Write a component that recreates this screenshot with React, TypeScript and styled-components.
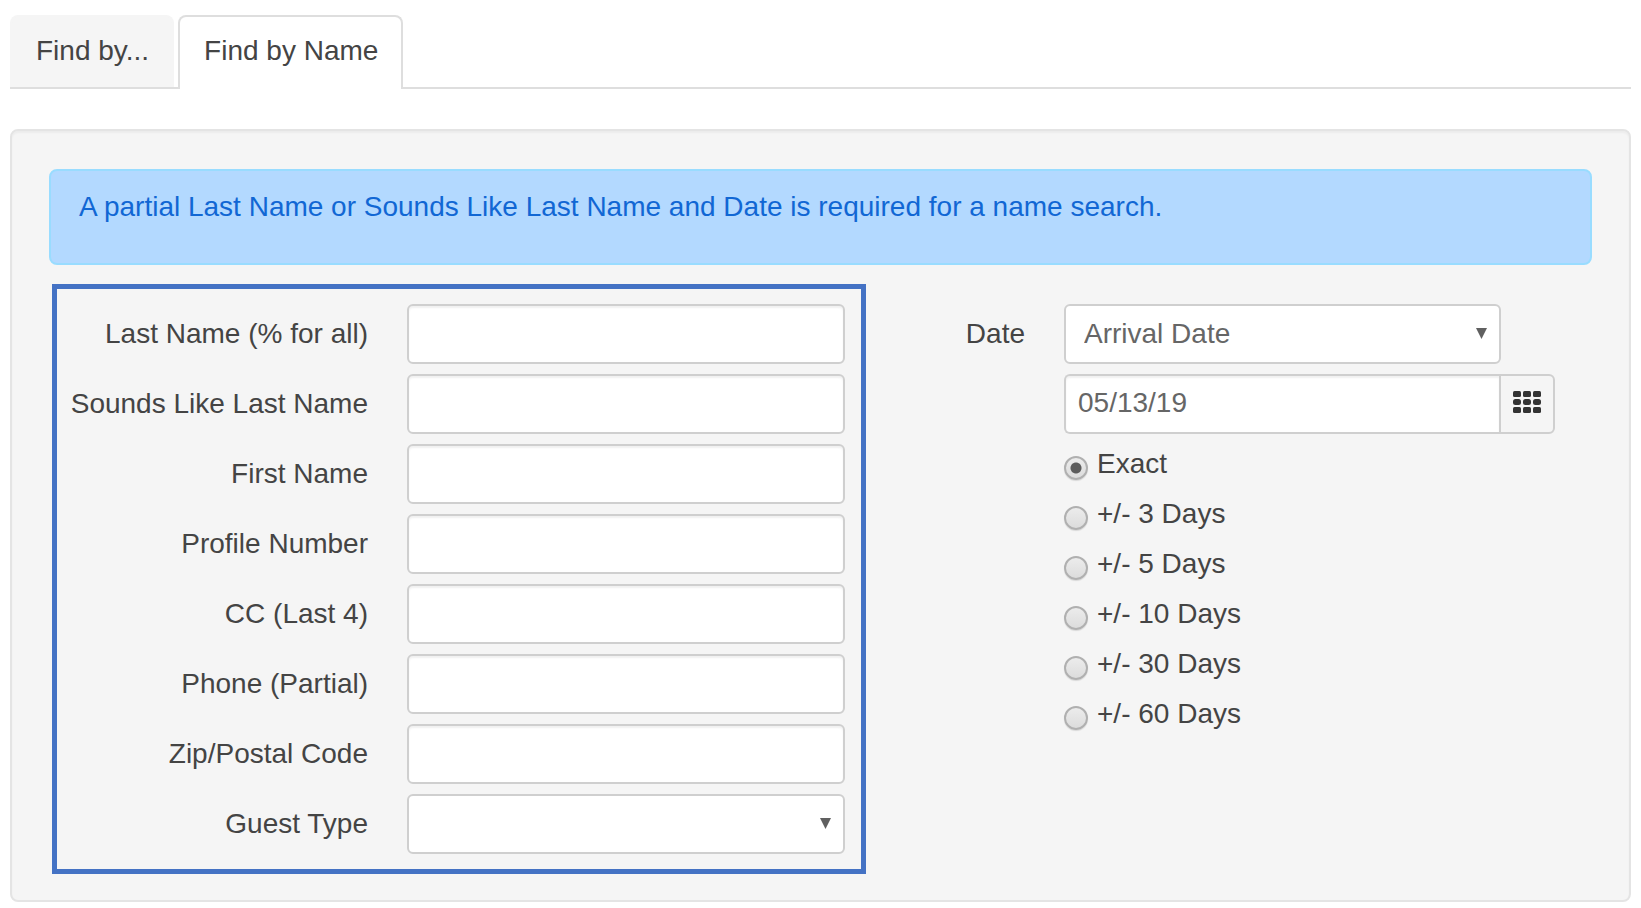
import React, { useState } from "react";
import styled, { createGlobalStyle, css } from "styled-components";

const GlobalStyle = createGlobalStyle`
  *, *::before, *::after { box-sizing: border-box; }
  body {
    margin: 0;
    background: #fff;
    color: #444;
    font: 28px/40px "Liberation Sans", Arial, Helvetica, sans-serif;
  }
  button, input, select { font: inherit; color: inherit; margin: 0; }
`;

const Page = styled.main`
  padding: 15px 10px 0;
`;

const TabList = styled.div`
  display: flex;
  gap: 4px;
  border-bottom: 2px solid #dedede;
`;

const Tab = styled.button<{ $active: boolean }>`
  height: 72px;
  padding: 0 23px 2px 24px;
  border: 2px solid ${(p) => (p.$active ? "#dedede" : "#f5f5f5")};
  border-bottom: 0;
  border-radius: 8px 8px 0 0;
  background: ${(p) => (p.$active ? "#fff" : "#f5f5f5")};
  cursor: pointer;
  ${(p) =>
    p.$active &&
    css`
      height: 74px;
      margin-bottom: -2px;
      padding-bottom: 4px;
    `}
`;

const Panel = styled.section`
  margin-top: 40px;
  padding: 38px 37px 26px;
  border: 2px solid #e4e4e4;
  border-radius: 8px;
  background: #f5f5f5;
  box-shadow: inset 0 2px 2px rgba(0, 0, 0, 0.04);
`;

const Notice = styled.p`
  margin: 0 0 19px;
  padding: 16px 28px 36px;
  border: 2px solid #99dcff;
  border-radius: 8px;
  background: #b3d9ff;
  color: #1167d4;
`;

const Form = styled.form`
  display: grid;
  grid-template-columns: minmax(0, 817fr) minmax(0, 726fr);
  align-items: start;
`;

const NameFields = styled.div`
  display: grid;
  gap: 10px;
  margin-left: 3px;
  padding: 15px 16px 15px 0;
  border: 5px solid #4472c4;
`;

const DateFields = styled.div`
  display: grid;
  gap: 10px;
  padding: 20px 37px 0 0;
`;

const Row = styled.div<{ $label: number }>`
  display: grid;
  grid-template-columns: ${(p) => p.$label}px minmax(0, 1fr);
  column-gap: 39px;
  align-items: center;
`;

const Label = styled.label`
  text-align: right;
`;

const control = css`
  width: 100%;
  height: 60px;
  border: 2px solid #cfcfcf;
  border-radius: 6px;
  background: #fff;
  color: #666;
`;

const TextInput = styled.input<{ $joined?: boolean }>`
  ${control}
  padding: 0 12px 2px;
  box-shadow: inset 0 2px 2px rgba(0, 0, 0, 0.06);
  ${(p) =>
    p.$joined &&
    css`
      flex: 1;
      min-width: 0;
      border-right: 0;
      border-radius: 6px 0 0 6px;
    `}
`;

const SelectBox = styled.div<{ $inset?: boolean }>`
  position: relative;
  margin-right: ${(p) => (p.$inset ? "54px" : "0")};
`;

const Select = styled.select`
  ${control}
  padding: 0 40px 0 18px;
  appearance: none;
`;

const Arrow = styled.svg`
  position: absolute;
  top: 24px;
  right: 14px;
  pointer-events: none;
`;

const InputGroup = styled.div`
  display: flex;
  grid-column: 2;
`;

const PickerButton = styled.button`
  display: flex;
  align-items: center;
  justify-content: center;
  width: 56px;
  height: 60px;
  padding: 0 0 4px;
  border: 2px solid #cfcfcf;
  border-radius: 0 6px 6px 0;
  background: #f5f5f5;
  cursor: pointer;
`;

const RadioList = styled.div`
  display: grid;
  grid-column: 2;
  gap: 10px;
`;

const RadioLabel = styled.label`
  display: flex;
  align-items: center;
  gap: 9px;
  width: fit-content;
`;

const Radio = styled.input`
  appearance: none;
  width: 24px;
  height: 24px;
  margin-top: 8px;
  border: 2px solid #b0b0b0;
  border-radius: 50%;
  background: linear-gradient(#ececec, #dcdcdc);
  box-shadow: 0 1px 1px rgba(0, 0, 0, 0.12);
  &:checked {
    background: radial-gradient(circle, #5c5c5c 0 5px, transparent 6px),
      linear-gradient(#ececec, #dcdcdc);
  }
`;

const DropArrow = () => (
  <Arrow width="11" height="11" viewBox="0 0 11 11" aria-hidden="true">
    <path d="M0 0H11L5.5 11Z" fill="#606060" />
  </Arrow>
);

const GridIcon = () => (
  <svg width="28" height="22" viewBox="0 0 28 22" fill="#333" aria-hidden="true">
    {[0, 10, 20].map((x) => (
      <React.Fragment key={x}>
        <rect x={x} y="0" width="8" height="6" rx="1.5" />
        <rect x={x} y="8" width="8" height="6" rx="2.5" />
        <rect x={x} y="16" width="8" height="6" rx="1.5" />
      </React.Fragment>
    ))}
  </svg>
);

const textFields = [
  ["lastName", "Last Name (% for all)"],
  ["soundsLike", "Sounds Like Last Name"],
  ["firstName", "First Name"],
  ["profileNumber", "Profile Number"],
  ["ccLast4", "CC (Last 4)"],
  ["phone", "Phone (Partial)"],
  ["postalCode", "Zip/Postal Code"],
];

const ranges = [
  "Exact",
  "+/- 3 Days",
  "+/- 5 Days",
  "+/- 10 Days",
  "+/- 30 Days",
  "+/- 60 Days",
];

const tabs = ["Find by...", "Find by Name"];

export default function App() {
  const [tab, setTab] = useState(tabs[1]);
  const [range, setRange] = useState(ranges[0]);

  return (
    <Page>
      <GlobalStyle />
      <TabList role="tablist">
        {tabs.map((name) => (
          <Tab
            key={name}
            type="button"
            role="tab"
            aria-selected={tab === name}
            $active={tab === name}
            onClick={() => setTab(name)}
          >
            {name}
          </Tab>
        ))}
      </TabList>
      <Panel>
        <Notice>
          A partial Last Name or Sounds Like Last Name and Date is required for a name search.
        </Notice>
        <Form onSubmit={(e) => e.preventDefault()}>
          <NameFields>
            {textFields.map(([id, label]) => (
              <Row key={id} $label={311}>
                <Label htmlFor={id}>{label}</Label>
                <TextInput id={id} name={id} type="text" />
              </Row>
            ))}
            <Row $label={311}>
              <Label htmlFor="guestType">Guest Type</Label>
              <SelectBox>
                <Select id="guestType" name="guestType">
                  <option value="" />
                </Select>
                <DropArrow />
              </SelectBox>
            </Row>
          </NameFields>
          <DateFields>
            <Row $label={159}>
              <Label htmlFor="dateType">Date</Label>
              <SelectBox $inset>
                <Select id="dateType" name="dateType">
                  <option>Arrival Date</option>
                </Select>
                <DropArrow />
              </SelectBox>
            </Row>
            <Row $label={159}>
              <InputGroup>
                <TextInput $joined type="text" name="date" aria-label="Date value" defaultValue="05/13/19" />
                <PickerButton type="button" aria-label="Open calendar">
                  <GridIcon />
                </PickerButton>
              </InputGroup>
            </Row>
            <Row $label={159}>
              <RadioList role="radiogroup" aria-label="Date range">
                {ranges.map((name) => (
                  <RadioLabel key={name}>
                    <Radio
                      type="radio"
                      name="range"
                      value={name}
                      checked={range === name}
                      onChange={() => setRange(name)}
                    />
                    {name}
                  </RadioLabel>
                ))}
              </RadioList>
            </Row>
          </DateFields>
        </Form>
      </Panel>
    </Page>
  );
}
